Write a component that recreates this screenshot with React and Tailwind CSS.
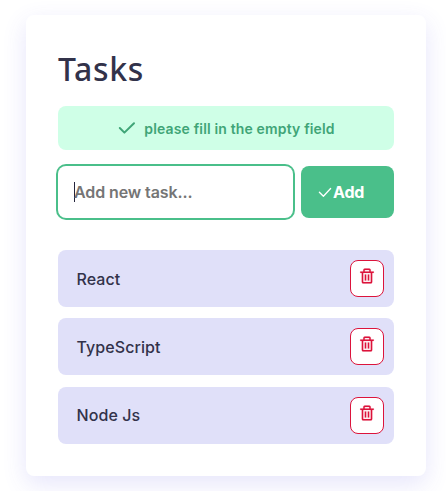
import { BiTrash } from "react-icons/bi";

const tasks = ["React", "TypeScript", "Node Js"];

function Notice({ children }) {
  return (
    <div className="flex h-11 items-center justify-center rounded-lg bg-[#cfffe7] pl-px text-[#3fa577]">
      <svg className="mr-2 h-[14px] w-[18px]" viewBox="0 0 18 14" fill="none" stroke="currentColor" strokeWidth="2" strokeLinecap="round" strokeLinejoin="round">
        <path d="M1.8 7 6.4 11.6 16 2.2" />
      </svg>
      <span className="pt-[2px] text-[14px] leading-5 font-semibold tracking-[0.15px]">{children}</span>
    </div>
  );
}

function Task({ name }) {
  return (
    <li className="flex h-[57px] items-center justify-between rounded-lg bg-[#e0e0f9] pr-2.5 pl-[18.5px]">
      <span className="text-[16px] font-medium tracking-[0.08px]">{name}</span>
      <button aria-label={`Delete ${name}`} className="flex h-[37px] w-[34px] justify-center rounded-lg border border-[#dc143c] bg-white pt-[6px] text-[#dc143c]">
        <BiTrash size={18} stroke="currentColor" strokeWidth={0.2} />
      </button>
    </li>
  );
}

export default function App() {
  return (
    <main className="h-[491px] overflow-hidden bg-white pt-[15px] pl-[26px] font-['Inter','Liberation_Sans',sans-serif] text-[#32324a]">
      <section className="h-[461px] w-[400px] rounded-lg bg-white px-8 pt-[30px] shadow-[0_8px_24px_rgba(79,70,229,0.14)]">
        <h1 className="h-[61px] font-['Noto_Sans',sans-serif] text-[32px] leading-[48px] font-medium tracking-[0.64px]">Tasks</h1>
        <Notice>please fill in the empty field</Notice>
        <form className="mt-4 flex h-[52px] gap-2">
          <div className="flex w-[235px] items-center rounded-lg bg-white pl-4 ring-2 ring-[#4abf8a]">
            <span className="h-5 w-px bg-[#25253c]" />
            <span className="-ml-px text-[16px] font-semibold tracking-[-0.1px] text-[#757575]">Add new task...</span>
          </div>
          <button type="button" className="flex w-[93px] items-center rounded-lg bg-[#4abf8a] pl-[17px] text-white">
            <svg className="h-4 w-[15px]" viewBox="0 0 15 16" fill="none" stroke="currentColor" strokeWidth="1.3" strokeLinecap="round" strokeLinejoin="round">
              <path d="m1.4 8.2 4 4 7.2-7.7" />
            </svg>
            <span className="text-[16px] font-bold tracking-[-0.2px]">Add</span>
          </button>
        </form>
        <ul className="mt-8 flex flex-col gap-[11.4px]">
          {tasks.map((name) => <Task key={name} name={name} />)}
        </ul>
      </section>
    </main>
  );
}
